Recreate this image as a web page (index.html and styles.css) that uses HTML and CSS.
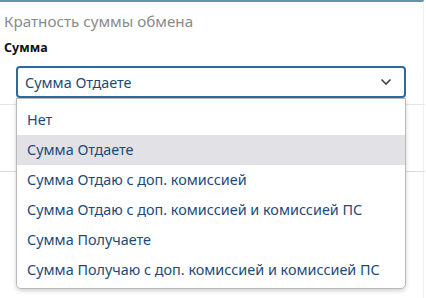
FILE: index.html
```html
<!DOCTYPE html>
<html lang="ru">
<head>
  <meta charset="UTF-8" />
  <title>Кратность суммы обмена</title>
  <link rel="stylesheet" href="styles.css">
</head>
<body>
  <div class="panel">
    <h3 class="panel-title">Кратность суммы обмена</h3>
    <label class="field-label">Сумма</label>

    <div class="select-wrap">
      <div class="select open">
        <span class="select-value">Сумма Отдаете</span>
        <svg class="chevron" width="12" height="8" viewBox="0 0 12 8">
          <path d="M1.5 1.5 L6 6 L10.5 1.5" fill="none" stroke="#444" stroke-width="1.6" />
        </svg>
      </div>

      <!-- Фон под списком -->
      <div class="back-row"></div>

      <ul class="options">
        <li>Нет</li>
        <li class="hover">Сумма Отдаете</li>
        <li>Сумма Отдаю с доп. комиссией</li>
        <li>Сумма Отдаю с доп. комиссией и комиссией ПС</li>
        <li>Сумма Получаете</li>
        <li>Сумма Получаю с доп. комиссией и комиссией ПС</li>
      </ul>
    </div>
  </div>
</body>
</html>
```

FILE: styles.css
```css
* {
  box-sizing: border-box;
}
body {
  margin: 0;
  font-family: 'Noto Sans', 'Open Sans', sans-serif;
  background: #fff;
  overflow: hidden;
}

.panel {
  border-top: 2px solid #5e97a8;
  border-right: 1px solid #eef0f2;
  width: 424px;
  height: 298px;
  padding: 9px 4px 0 4px;
}

.panel-title {
  margin: 0;
  font-size: 15.2px;
  font-weight: 400;
  color: #8a8a8a;
  line-height: 20px;
}

.field-label {
  display: block;
  margin-top: 9px;
  font-size: 12.5px;
  font-weight: 700;
  color: #111;
  line-height: 16px;
}

.select-wrap {
  position: relative;
  margin: 10px 0 0 -4px;
  padding-left: 16px;
  width: 425px;
}

.select {
  width: 390px;
  height: 32px;
  border: 2px solid #2f6a9c;
  border-radius: 4px;
  display: flex;
  align-items: center;
  justify-content: space-between;
  padding: 0 12px 0 7px;
  color: #1c4a78;
  font-size: 14.4px;
}

.back-row {
  height: 68px;
  margin-top: 6px;
  border-top: 1px solid #e6e6e6;
  border-bottom: 1px solid #dcdcdc;
  margin-left: -16px;
}

.options {
  position: absolute;
  left: 16px;
  top: 32px;
  width: 390px;
  margin: 0;
  padding: 6px 0 3px 0;
  list-style: none;
  background: #fff;
  border: 1px solid #b9b9b9;
  border-radius: 0 0 5px 5px;
  box-shadow: 0 2px 4px rgba(0, 0, 0, 0.18);
  z-index: 10;
}

.options li {
  height: 30px;
  line-height: 30px;
  padding-left: 10px;
  font-size: 14.4px;
  color: #1c4a78;
  white-space: nowrap;
}

.options li.hover {
  background: #e1e1e6;
}
```
